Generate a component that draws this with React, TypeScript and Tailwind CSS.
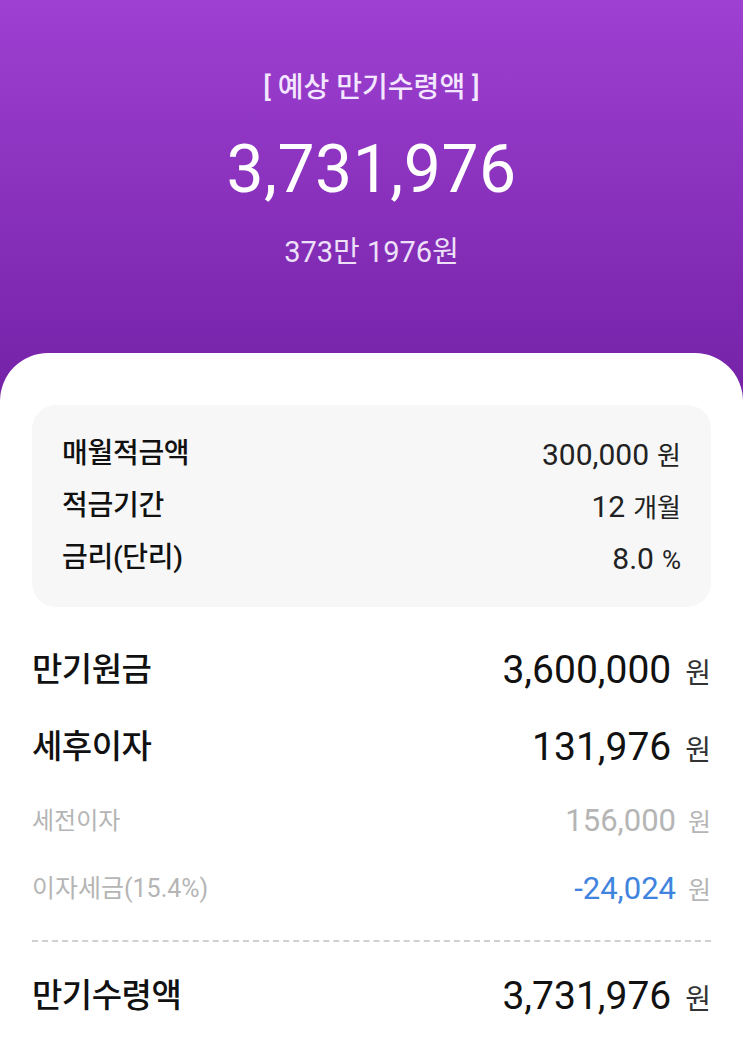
import React from "react";

const font = { fontFamily: 'Roboto, "Noto Sans CJK KR", sans-serif' };

function InfoRow({ label, value, unit }: { label: string; value: string; unit: string }) {
  return (
    <div className="flex items-center justify-between h-[52px]">
      <span className="text-[28px] font-medium text-[#111] tracking-[-0.3px]">{label}</span>
      <span className="flex items-baseline gap-[8px] text-[#222]">
        <span className="text-[30px]">{value}</span>
        <span className="text-[26px]">{unit}</span>
      </span>
    </div>
  );
}

export default function App() {
  return (
    <div
      style={font}
      className="w-[743px] h-[1057px] overflow-hidden bg-[#7522a8] bg-[linear-gradient(to_bottom,#9e40d2_0px,#7522a8_390px)]"
    >
      <div className="flex flex-col items-center pt-[70px] h-[353px] text-white">
        <div className="text-[28px] font-medium text-[#f3e6ff] leading-[36px]">[ 예상 만기수령액 ]</div>
        <div className="mt-[22px] text-[66px] leading-[84px] tracking-[0.5px]">3,731,976</div>
        <div className="mt-[22px] text-[29px] text-[#ede0f8] leading-[36px]">373만 1976원</div>
      </div>
      <div className="bg-white rounded-t-[48px] h-[704px] px-[32px] pt-[52px]">
        <div className="bg-[#f7f7f7] rounded-[24px] px-[30px] py-[23px]">
          <InfoRow label="매월적금액" value="300,000" unit="원" />
          <InfoRow label="적금기간" value="12" unit="개월" />
          <InfoRow label="금리(단리)" value="8.0" unit="%" />
        </div>
        <div className="mt-[24px]">
          <div className="flex items-center justify-between h-[78px]">
            <span className="text-[33px] font-medium text-[#111] tracking-[-0.5px]">만기원금</span>
            <span className="flex items-baseline gap-[14px]">
              <span className="text-[39px] text-[#111]">3,600,000</span>
              <span className="text-[28px] text-[#333]">원</span>
            </span>
          </div>
          <div className="flex items-center justify-between h-[76px]">
            <span className="text-[33px] font-medium text-[#111] tracking-[-0.5px]">세후이자</span>
            <span className="flex items-baseline gap-[14px]">
              <span className="text-[39px] text-[#111]">131,976</span>
              <span className="text-[28px] text-[#333]">원</span>
            </span>
          </div>
          <div className="flex items-center justify-between h-[72px]">
            <span className="text-[24px] text-[#b5b5b5]">세전이자</span>
            <span className="flex items-baseline gap-[12px]">
              <span className="text-[31px] text-[#b5b5b5]">156,000</span>
              <span className="text-[25px] text-[#b5b5b5]">원</span>
            </span>
          </div>
          <div className="flex items-center justify-between h-[64px]">
            <span className="text-[25px] text-[#b5b5b5]">이자세금(15.4%)</span>
            <span className="flex items-baseline gap-[12px]">
              <span className="text-[31px] text-[#3f84de]">-24,024</span>
              <span className="text-[25px] text-[#b5b5b5]">원</span>
            </span>
          </div>
          <div className="mt-[19px] border-t-2 border-dashed border-[#d0d0d0]" />
          <div className="flex items-center justify-between h-[108px]">
            <span className="text-[33px] font-medium text-[#111] tracking-[-0.5px]">만기수령액</span>
            <span className="flex items-baseline gap-[14px]">
              <span className="text-[39px] text-[#111]">3,731,976</span>
              <span className="text-[28px] text-[#333]">원</span>
            </span>
          </div>
        </div>
      </div>
    </div>
  );
}
